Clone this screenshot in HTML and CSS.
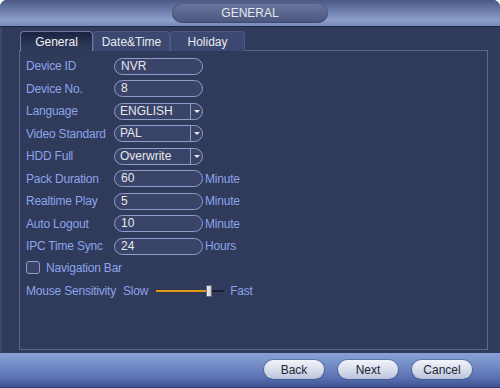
FILE: index.html
```html
<!DOCTYPE html>
<html>
<head>
<meta charset="utf-8">
<link rel="stylesheet" href="styles.css">
</head>
<body>
<div class="window">
  <div class="header">
    <div class="title">GENERAL</div>
  </div>
  <div class="main">
    <div class="tabs">
      <div class="tab tab-active">General</div>
      <div class="tab tab-dt">Date&amp;Time</div>
      <div class="tab tab-hol">Holiday</div>
    </div>
    <div class="panel">
      <div class="row"><span class="label">Device ID</span><span class="field">NVR</span></div>
      <div class="row"><span class="label">Device No.</span><span class="field">8</span></div>
      <div class="row"><span class="label">Language</span><span class="field select"><span class="val">ENGLISH</span><span class="arrow"></span></span></div>
      <div class="row"><span class="label">Video Standard</span><span class="field select"><span class="val">PAL</span><span class="arrow"></span></span></div>
      <div class="row"><span class="label">HDD Full</span><span class="field select"><span class="val">Overwrite</span><span class="arrow"></span></span></div>
      <div class="row"><span class="label">Pack Duration</span><span class="field">60</span><span class="unit">Minute</span></div>
      <div class="row"><span class="label">Realtime Play</span><span class="field">5</span><span class="unit">Minute</span></div>
      <div class="row"><span class="label">Auto Logout</span><span class="field">10</span><span class="unit">Minute</span></div>
      <div class="row"><span class="label">IPC Time Sync</span><span class="field">24</span><span class="unit">Hours</span></div>
      <div class="row"><span class="check"></span><span class="check-label">Navigation Bar</span></div>
      <div class="row">
        <span class="mouse-label">Mouse Sensitivity</span>
        <span class="slow">Slow</span>
        <span class="slider"><span class="fill"></span><span class="thumb"></span><span class="rest"></span></span>
        <span class="fast">Fast</span>
      </div>
    </div>
  </div>
  <div class="footer">
    <button class="btn">Back</button>
    <button class="btn">Next</button>
    <button class="btn">Cancel</button>
  </div>
</div>
</body>
</html>
```
FILE: styles.css
```css
* { box-sizing: border-box; }
html, body { margin: 0; padding: 0; background: #ffffff; }
body { font-family: "Liberation Sans", Arial, sans-serif; font-size: 12px; }

.window {
  width: 500px;
  height: 388px;
  display: flex;
  flex-direction: column;
  background: #303a5b;
  border-radius: 7px 7px 0 0;
  overflow: hidden;
}

.header {
  height: 27px;
  flex: none;
  background: linear-gradient(#4b5884 0%, #6c7dab 40%, #8d9fcb 78%, #7a8cbc 96%);
  border-bottom: 1px solid #1f2742;
  display: flex;
  justify-content: center;
  padding-top: 3px;
}
.title {
  width: 156px;
  height: 20px;
  border-radius: 10px;
  background: linear-gradient(#6a779e, #4a557d);
  color: #e4e6ee;
  text-align: center;
  line-height: 20px;
  font-size: 12px;
  box-shadow: inset 0 0 0 1px rgba(40, 48, 80, 0.35);
}

.main {
  flex: 1;
  border-left: 2px solid #3b4772;
  padding: 4px 12px 3px 17px;
  display: flex;
  flex-direction: column;
}

.tabs {
  display: flex;
  height: 20px;
  margin-left: 1px;
  margin-bottom: -1px;
  position: relative;
  z-index: 1;
}
.tab {
  height: 20px;
  background: #3d4870;
  color: #e8e9ee;
  text-align: center;
  line-height: 20px;
  border-radius: 4px 4px 0 0;
  border: 1px solid #4d5880;
  border-bottom: none;
}
.tab-active {
  width: 73px;
  background: linear-gradient(#1b2340, #2c3656 70%, #303a5b);
  border: 1px solid #6e7aa0;
  border-bottom: none;
  color: #f4f4f8;
}
.tab-dt { width: 77px; }
.tab-hol { width: 75px; }

.panel {
  flex: 1;
  border: 1px solid #5c6791;
  padding: 4px 0 0 6px;
  letter-spacing: -0.2px;
}

.row {
  height: 22.5px;
  display: flex;
  align-items: center;
}
.label {
  width: 88px;
  color: #8ca4ea;
}
.field {
  width: 89px;
  height: 17px;
  border: 1px solid #8e9dcc;
  border-radius: 9px;
  background: #3a4468;
  color: #e8e8ec;
  padding-left: 6px;
  line-height: 15px;
  display: flex;
  align-items: center;
  letter-spacing: 0;
}
.select { padding-left: 0; }
.select .val { flex: 1; padding-left: 5px; }
.arrow {
  width: 12px;
  height: 15px;
  border-left: 1px solid #8e9dcc;
  position: relative;
}
.arrow::after {
  content: "";
  position: absolute;
  left: 3px;
  top: 6px;
  border-left: 3px solid transparent;
  border-right: 3px solid transparent;
  border-top: 3px solid #e8e8ee;
}
.unit {
  color: #8ca4ea;
  margin-left: 2px;
}

.check {
  width: 14px;
  height: 13px;
  border: 1px solid #8e9dcc;
  border-radius: 3px;
  background: #3a4468;
  margin-top: -2px;
}
.check-label {
  color: #8ca4ea;
  margin-left: 6px;
  margin-top: -2px;
}

.mouse-label { color: #8ca4ea; }
.slow { color: #8ca4ea; margin-left: 7px; }
.fast { color: #8ca4ea; margin-left: 6px; }
.slider {
  display: flex;
  align-items: center;
  margin-left: 8px;
  height: 13px;
}
.fill { width: 50px; height: 2px; background: #e29a12; }
.thumb {
  width: 6px;
  height: 12px;
  border-radius: 1px;
  background: linear-gradient(90deg, #f4f4f4, #c8c8d0);
  border: 1px solid #6a6f80;
}
.rest { width: 12px; height: 2px; background: #1a1f30; }

.footer {
  height: 35px;
  flex: none;
  background: linear-gradient(#8aa1d6 0%, #7790c9 30%, #5a72b3 70%, #3e5391 97%, #1e2848 100%);
  display: flex;
  justify-content: flex-end;
  align-items: center;
  gap: 14px;
  padding-right: 28px;
  padding-bottom: 2px;
}
.btn {
  width: 60px;
  height: 19px;
  border: none;
  border-radius: 10px;
  background: linear-gradient(#f2f4fa, #d6dcea 55%, #b8c2da);
  color: #202838;
  font-family: "Liberation Sans", Arial, sans-serif;
  font-size: 12px;
  padding: 0;
  box-shadow: 0 0 0 1px rgba(40, 55, 100, 0.35);
}
```
